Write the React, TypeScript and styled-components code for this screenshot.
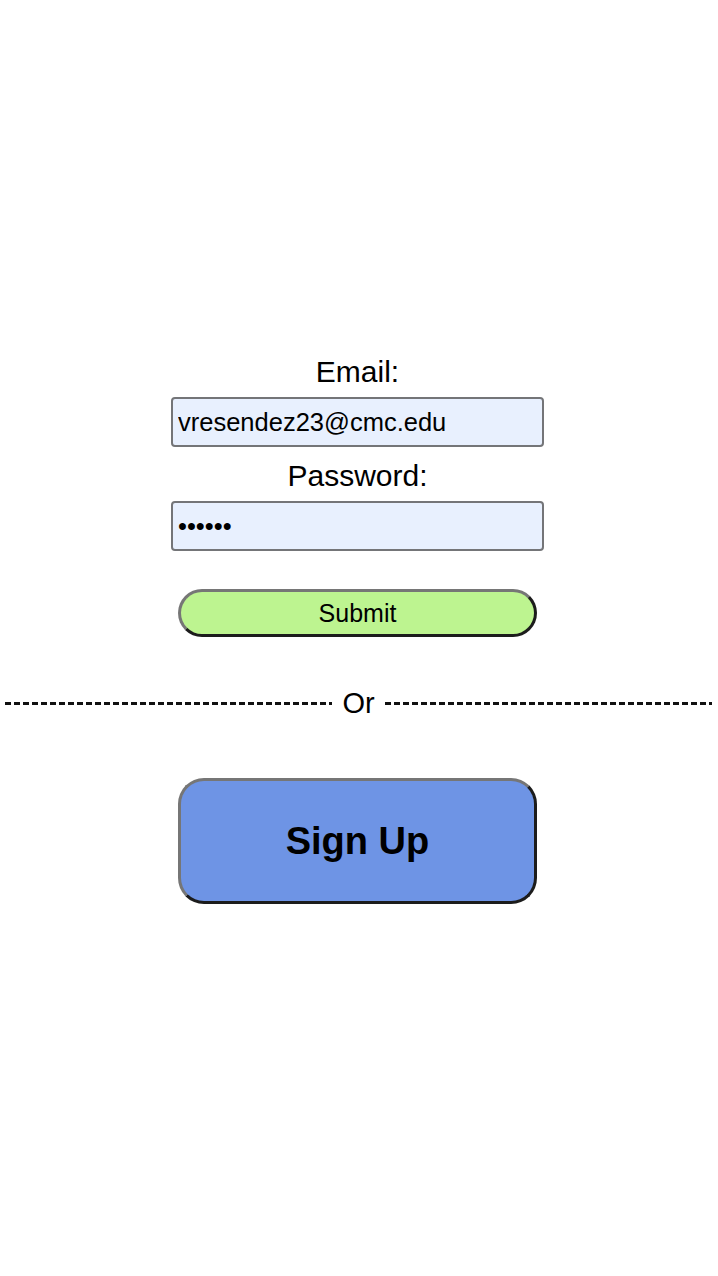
import styled, { createGlobalStyle } from 'styled-components';

const GlobalStyle = createGlobalStyle`
  html, body {
    margin: 0;
    padding: 0;
    background: #ffffff;
    font-family: "Liberation Sans", Arial, Helvetica, sans-serif;
    color: #000;
  }
`;

const Page = styled.main`
  min-height: 1276px;
  padding-top: 355px;
  box-sizing: border-box;
`;

const Form = styled.form`
  display: flex;
  flex-direction: column;
  align-items: center;
  padding-right: 3px;
`;

const Label = styled.label<{ $gapTop?: number }>`
  font-size: 30px;
  line-height: 34px;
  margin-top: ${(props) => props.$gapTop ?? 0}px;
  margin-bottom: 8px;
`;

const Field = styled.input`
  box-sizing: border-box;
  width: 373px;
  height: 50px;
  padding: 0 5px;
  font-family: "Liberation Sans", Arial, sans-serif;
  font-size: 25.5px;
  color: #000;
  background: #e8f0fe;
  border: 2px solid #747578;
  border-radius: 4px;
  outline: none;
`;

const ActionButton = styled.button<{ $tall?: boolean }>`
  box-sizing: border-box;
  width: 359px;
  height: ${(props) => (props.$tall ? '126px' : '48px')};
  margin-top: ${(props) => (props.$tall ? '0' : '38px')};
  font-family: "Liberation Sans", Arial, sans-serif;
  font-size: ${(props) => (props.$tall ? '38px' : '25px')};
  font-weight: ${(props) => (props.$tall ? 700 : 400)};
  color: #000;
  background: ${(props) => (props.$tall ? '#6e94e5' : '#bdf490')};
  border: 3px solid;
  border-color: #767676 #1c1c1c #1c1c1c #767676;
  border-radius: ${(props) => (props.$tall ? '26px' : '24px')};
  padding: 0;
  cursor: pointer;
`;

const Divider = styled.div`
  display: flex;
  align-items: center;
  gap: 10px;
  padding: 0 6px 0 5px;
  height: 34px;
  margin: 49px 0 58px;
`;

const Dashes = styled.span`
  flex: 1;
  height: 3px;
  background: repeating-linear-gradient(
    to right,
    #111 0,
    #111 6px,
    transparent 6px,
    transparent 9px
  );
`;

const OrText = styled.span`
  font-size: 29px;
  line-height: 34px;
`;

const Center = styled.div`
  display: flex;
  justify-content: center;
  padding-right: 3px;
`;

export default function App() {
  return (
    <>
      <GlobalStyle />
      <Page>
        <Form onSubmit={(e) => e.preventDefault()}>
          <Label htmlFor="email">Email:</Label>
          <Field id="email" type="email" defaultValue="vresendez23@cmc.edu" />
          <Label htmlFor="password" $gapTop={12}>
            Password:
          </Label>
          <Field id="password" type="password" defaultValue="secret" />
          <ActionButton type="submit">Submit</ActionButton>
        </Form>
        <Divider>
          <Dashes />
          <OrText>Or</OrText>
          <Dashes />
        </Divider>
        <Center>
          <ActionButton $tall type="button">
            Sign Up
          </ActionButton>
        </Center>
      </Page>
    </>
  );
}
